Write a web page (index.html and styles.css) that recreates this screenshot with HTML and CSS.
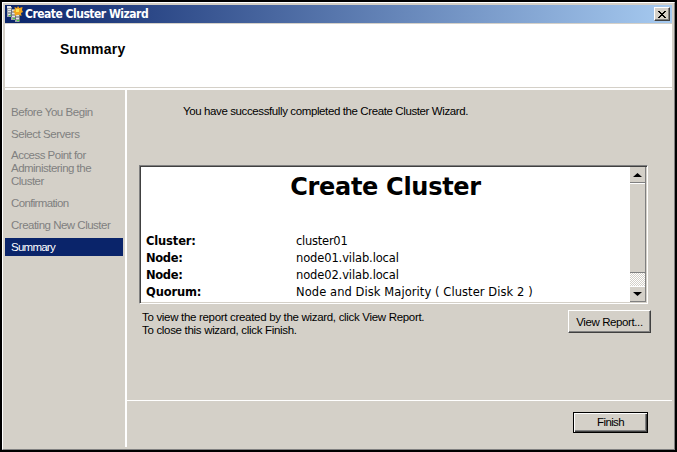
FILE: index.html
```html
<!DOCTYPE html>
<html lang="en">
<head>
<meta charset="utf-8">
<title>Create Cluster Wizard</title>
<link rel="stylesheet" href="styles.css">
</head>
<body>
<div class="window">
  <header class="titlebar">
    <svg class="app-icon" width="16" height="16" viewBox="0 0 16 16" shape-rendering="crispEdges">
      <path fill="#9da2a8" d="M0 1h5v10H0zM4 3h5v11H4zM8 5h5v11H8z"/>
      <path fill="#e3e6e8" d="M0 0h4v2H0zM1 3h3v1H1zM1 5h3v1H1zM1 8h2v1H1zM5 4h3v1H5zM5 7h3v1H5zM5 10h3v1H5zM9 9h3v1H9zM9 12h3v1H9z"/>
      <path fill="#6b727b" d="M4 2h1v9H4zM8 5h1v9H8zM12 9h1v7h-1z"/>
      <path fill="#42d83b" d="M2 9h2v1H2zM6 12h2v1H6zM10 14h2v1h-2z"/>
      <path fill="#f2a51c" shape-rendering="auto" d="M11 0l1.300 2L15.500 1l-.5 3L16 6l-2 1 .5 3L11 8.500 8 10 7.500 7 6 5l2-1L7.500 1l2.500 1z"/>
      <path fill="#ffe44c" d="M9 3h3v3H9z"/>
    </svg>
    <h1 class="title">Create Cluster Wizard</h1>
    <button class="close" aria-label="Close"><svg width="8" height="7" viewBox="0 0 8 7" shape-rendering="crispEdges"><path d="M0 0h2v1h1v1h2V1h1V0h2v1H7v1H6v1H5v1h1v1h1v1h1v1H6V6H5V5H3v1H2v1H0V6h1V5h1V4h1V3H2V2H1V1H0z"/></svg></button>
  </header>
  <div class="banner"><h2>Summary</h2></div>
  <div class="body">
    <nav class="steps">
      <div class="step s1">Before You Begin</div>
      <div class="step s2">Select Servers</div>
      <div class="step s3">Access Point for<br>Administering the<br>Cluster</div>
      <div class="step s4">Confirmation</div>
      <div class="step s5">Creating New Cluster</div>
      <div class="step current">Summary</div>
    </nav>
    <main class="main">
      <section class="content">
        <p class="message">You have successfully completed the Create Cluster Wizard.</p>
        <div class="report">
          <div class="page">
            <h3>Create Cluster</h3>
            <dl>
              <dt>Cluster:</dt><dd class="name">cluster01</dd>
              <dt class="node">Node:</dt><dd class="host">node01.vilab.local</dd>
              <dt class="node">Node:</dt><dd class="host">node02.vilab.local</dd>
              <dt>Quorum:</dt><dd class="quorum">Node and Disk Majority ( Cluster Disk 2 )</dd>
            </dl>
          </div>
          <div class="scrollbar">
            <div class="arrow"><svg width="9" height="4" viewBox="0 0 9 4"><path d="M4.500 0L9 4H0z"/></svg></div>
            <div class="thumb"></div>
            <div class="track"></div>
            <div class="arrow down"><svg width="9" height="4" viewBox="0 0 9 4"><path d="M0 0h9L4.500 4z"/></svg></div>
          </div>
        </div>
        <div class="hint">
          <p>To view the report created by the wizard, click View Report.<br>To close this wizard, click Finish.</p>
          <button class="view">View Report...</button>
        </div>
      </section>
      <footer class="footer"><button class="finish">Finish</button></footer>
    </main>
  </div>
</div>
</body>
</html>
```
FILE: styles.css
```css
* { box-sizing: border-box; }
body { margin: 0; width: 677px; height: 452px; background: #000; padding: 2px; overflow: hidden; font: 11.5px/13px "Liberation Sans", Arial, sans-serif; color: #000; }
h1, h2, h3, p, dl, dd { margin: 0; }
button { font: inherit; color: inherit; padding: 0; border-radius: 0; background: #d4d0c8; display: flex; align-items: center; justify-content: center; }
.window { width: 673px; height: 448px; background: #d4d0c8; border: 1px solid; border-color: #fff #808080 #808080 #fff; padding: 2px; display: flex; flex-direction: column; }
.titlebar { height: 18px; flex: none; display: flex; align-items: center; background: linear-gradient(90deg, #0a246a, #a6caf0); padding: 0 2px; }
.app-icon { margin-right: 2px; }
.title { flex: 1; color: #fff; font: bold 12px/18px "DejaVu Sans Condensed", "DejaVu Sans", sans-serif; font-stretch: condensed; white-space: nowrap; letter-spacing: -.5px; }
.close { width: 16px; height: 14px; border: 1px solid; border-color: #fff #404040 #404040 #fff; box-shadow: inset -1px -1px #808080; }
.banner { margin-top: 1px; height: 66px; flex: none; background: #fff; box-shadow: inset 0 -2px #fff, inset 0 -3px #d4d0c8; padding: 16px 0 0 55px; }
.banner h2 { font-size: 14px; line-height: 18px; letter-spacing: .25px; }
.body { flex: 1; display: flex; min-height: 0; }
.steps { width: 120px; color: #808080; padding-top: 16px; }
.step { width: 118px; padding-left: 6px; margin-bottom: 9px; white-space: nowrap; letter-spacing: -.45px; }
.s2 { margin-bottom: 8px; }
.s3 { letter-spacing: -.52px; }
.s4 { letter-spacing: -.65px; }
.s5 { margin-bottom: 6px; letter-spacing: -.5px; }
.current { background: #0a246a; color: #fff; height: 18px; line-height: 19px; letter-spacing: -.75px; }
.main { flex: 1; border-left: 2px solid #fff; display: flex; flex-direction: column; }
.content { height: 310px; padding: 15px 21px 0 12px; }
.message { padding-left: 44px; height: 60px; white-space: nowrap; letter-spacing: -.39px; }
.report { width: 509px; height: 139px; border: 1px solid; border-color: #808080 #fff #fff #808080; display: flex; background: #fff; box-shadow: inset 1px 1px #404040, inset -1px -1px #d4d0c8; padding: 1px; }
.page { flex: 1; margin-top: 1px; background: #fff; overflow: hidden; font-family: "DejaVu Sans", Verdana, sans-serif; }
.page h3 { font-size: 24px; line-height: 38px; text-align: center; height: 65px; letter-spacing: -.3px; }
.page dl { display: grid; grid-template-columns: 150px 1fr; grid-auto-rows: 17px; padding-left: 5px; line-height: 17px; font-size: 11.5px; white-space: nowrap; }
dt { font-weight: bold; letter-spacing: -.15px; }
.node { letter-spacing: -.35px; }
.name { letter-spacing: -.25px; }
.host { letter-spacing: -.12px; }
.quorum { letter-spacing: .07px; }
.scrollbar { width: 16px; display: flex; flex-direction: column; background: #d4d0c8; border-right: 1px solid #808080; }
.arrow { height: 16px; display: flex; align-items: center; justify-content: center; border-bottom: 1px solid #808080; flex: none; }
.thumb { height: 90px; border-top: 1px solid #fff; border-bottom: 1px solid #808080; }
.track { flex: 1; background: repeating-conic-gradient(#fff 0 25%, #d4d0c8 0 50%) 0 0 / 2px 2px; }
.down { border-top: 1px solid #fff; }
.hint { display: flex; justify-content: space-between; padding: 6px 0 0 3px; width: 512px; }
.hint p { white-space: nowrap; letter-spacing: -.31px; padding-top: 1px; }
.view { width: 83px; height: 23px; border: 1px solid; border-color: #fff #404040 #404040 #fff; box-shadow: inset -1px -1px #808080; letter-spacing: -.4px; padding-top: 1px; }
.footer { border-top: 1px solid #fff; flex: 1; padding: 11px 24px 0 0; display: flex; justify-content: flex-end; }
.finish { width: 75px; height: 21px; border: 1px solid #000; box-shadow: inset 1px 1px #fff, inset -1px -1px #404040, inset -2px -2px #808080; letter-spacing: -.65px; }
```
